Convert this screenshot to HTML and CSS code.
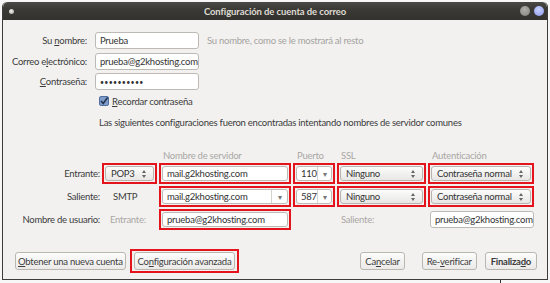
FILE: index.html
```html
<!DOCTYPE html>
<html>
<head>
    <title>Configuración de cuenta de correo</title>
    <link rel="stylesheet" href="styles.css">
</head>
<body>
    <div class="window">

        <div class="titlebar">
            <span class="dot-menu"></span>
            <span class="title">Configuración de cuenta de correo</span>
            <span class="dot dot-gray"></span>
            <span class="dot dot-blue"></span>
        </div>

        <div class="content">

            <div class="identity">
                <span class="label">Su <u>n</u>ombre:</span>
                <div class="field">Prueba</div>
                <span class="hint">Su nombre, como se le mostrará al resto</span>

                <span class="label">Correo e<u>l</u>ectrónico:</span>
                <div class="field">prueba@g2khosting.com</div>
                <span></span>

                <span class="label"><u>C</u>ontraseña:</span>
                <div class="field field-password">••••••••••</div>
                <span></span>
            </div>

            <div class="remember">
                <svg class="checkbox" width="10" height="10" viewBox="0 0 10 10">
                    <rect x="0.5" y="0.5" width="9" height="9" rx="1.5" fill="#7e9bc9" stroke="#4f6f9f"/>
                    <path d="M2 5 L4.2 7.4 L8.6 1.6" fill="none" stroke="#23344f" stroke-width="1.6"/>
                </svg>
                <span><u>R</u>ecordar contraseña</span>
            </div>

            <div class="info">Las siguientes configuraciones fueron encontradas intentando nombres de servidor comunes</div>

            <!-- Server settings grid -->
            <div class="servers">
                <span></span>
                <span></span>
                <span class="column-head">Nombre de servidor</span>
                <span class="column-head">Puerto</span>
                <span class="column-head">SSL</span>
                <span class="column-head">Autenticación</span>

                <span class="label">Entrante:</span>
                <div class="mark"><div class="select">POP3<span class="updown"></span></div></div>
                <div class="mark"><div class="field">mail.g2khosting.com</div></div>
                <div class="mark"><div class="combo">110<span class="drop">▾</span></div></div>
                <div class="mark"><div class="select">Ninguno<span class="updown"></span></div></div>
                <div class="mark"><div class="select">Contraseña normal<span class="updown"></span></div></div>

                <span class="label">Saliente:</span>
                <span class="protocol">SMTP</span>
                <div class="mark"><div class="combo">mail.g2khosting.com<span class="drop">▾</span></div></div>
                <div class="mark"><div class="combo">587<span class="drop">▾</span></div></div>
                <div class="mark"><div class="select">Ninguno<span class="updown"></span></div></div>
                <div class="mark"><div class="select">Contraseña normal<span class="updown"></span></div></div>

                <span class="label">Nombre de usuario:</span>
                <span class="muted muted-in">Entrante:</span>
                <div class="mark"><div class="field">prueba@g2khosting.com</div></div>
                <span></span>
                <span class="muted muted-out">Saliente:</span>
                <div class="field field-plain">prueba@g2khosting.com</div>
            </div>

            <div class="footer">
                <button class="button button-new"><u>O</u>btener una nueva cuenta</button>
                <div class="mark mark-button"><button class="button">Co<u>n</u>figuración avanzada</button></div>
                <span class="spacer"></span>
                <button class="button button-cancel">Ca<u>n</u>celar</button>
                <button class="button button-verify">Re-<u>v</u>erificar</button>
                <button class="button button-default">Finaliza<u>d</u>o</button>
            </div>

        </div>
    </div>

    <div class="below">
        <span class="below-text">Datos del servidor</span>
        <span class="below-line"></span>
    </div>
</body>
</html>
```

FILE: styles.css
```css
body
{
    margin: 0;
    background-color: #f7f7f7;
    font-family: Lato, "Open Sans", sans-serif;
    font-size: 9.5px;
    letter-spacing: -0.25px;
    color: #3c3c3c;
    overflow: hidden;
}

u
{
    text-decoration: underline;
    text-underline-offset: 1px;
}

.window
{
    margin: 2px 2px 0 2px;
    width: 544px;
    height: 277px;
    border: 1px solid #3d3c39;
    border-top: none;
    border-radius: 5px 5px 0 0;
    background-color: #f2f1f0;
    display: flex;
    flex-direction: column;
    overflow: hidden;
}

.titlebar
{
    height: 18px;
    flex-shrink: 0;
    display: flex;
    align-items: center;
    padding: 0 3px 0 6px;
    background: linear-gradient(to bottom, #4a4945, #3a3935 40%, #33322e);
    border-radius: 5px 5px 0 0;
}

.dot-menu
{
    width: 5px;
    height: 5px;
    border-radius: 50%;
    background: radial-gradient(circle at 40% 40%, #f4f4f4, #9b9a96);
}

.title
{
    flex: 1;
    text-align: center;
    color: #dfdbd2;
    font-weight: bold;
    font-size: 9.5px;
    letter-spacing: -0.1px;
    padding-left: 20px;
}

.dot
{
    width: 10px;
    height: 10px;
    border-radius: 50%;
    margin-left: 4px;
}

.dot-gray
{
    background: radial-gradient(circle at 45% 35%, #b0aea8, #84827c);
}

.dot-blue
{
    background: radial-gradient(circle at 45% 35%, #c9d0ff, #8797ea);
}

.content
{
    flex: 1;
    display: flex;
    flex-direction: column;
    padding-top: 12px;
}

.identity
{
    display: grid;
    grid-template-columns: 84px 104px auto;
    grid-auto-rows: 17px;
    column-gap: 8px;
    row-gap: 3.5px;
    align-items: center;
}

.label
{
    text-align: right;
    white-space: nowrap;
}

.field
{
    height: 100%;
    box-sizing: border-box;
    background-color: #fff;
    border: 1px solid #bdbab5;
    border-radius: 3px;
    padding: 0 4px;
    display: flex;
    align-items: center;
    white-space: nowrap;
    overflow: hidden;
    color: #333;
}

.field-password
{
    font-size: 7px;
    letter-spacing: 0.3px;
}

.hint
{
    color: #a5a39f;
    white-space: nowrap;
}

.remember
{
    display: flex;
    align-items: center;
    gap: 2px;
    margin: 5px 0 0 96px;
    height: 12px;
}

.checkbox
{
    margin-right: 1px;
}

.info
{
    margin: 9px 0 0 96px;
    line-height: 14px;
    white-space: nowrap;
}

.servers
{
    display: grid;
    grid-template-columns: 97px 55px 132px 42px 89px 106px;
    grid-template-rows: 12px 21px 21px 21px;
    column-gap: 2px;
    row-gap: 2px;
    align-items: center;
    margin-top: 19px;
}

.column-head
{
    color: #a9a7a3;
    padding-left: 4px;
    white-space: nowrap;
}

.mark
{
    height: 21px;
    box-sizing: border-box;
    border: 2px solid #e3141b;
    padding: 1px;
}

.mark .field
{
    height: 15px;
}

.select
{
    height: 15px;
    box-sizing: border-box;
    border: 1px solid #b7b4ae;
    border-radius: 3px;
    background: linear-gradient(to bottom, #fcfcfc, #e8e7e5);
    display: flex;
    align-items: center;
    padding-left: 5px;
    position: relative;
    white-space: nowrap;
    color: #333;
}

.updown
{
    position: absolute;
    right: 7px;
    top: 3px;
    width: 0;
    height: 0;
    border-left: 2px solid transparent;
    border-right: 2px solid transparent;
    border-bottom: 3px solid #666;
}

.updown::after
{
    content: "";
    position: absolute;
    left: -2px;
    top: 5px;
    border-left: 2px solid transparent;
    border-right: 2px solid transparent;
    border-top: 3px solid #666;
}

.combo
{
    height: 15px;
    box-sizing: border-box;
    border: 1px solid #bdbab5;
    border-radius: 3px;
    background-color: #fff;
    display: flex;
    align-items: center;
    padding-left: 4px;
    white-space: nowrap;
    color: #333;
}

.drop
{
    margin-left: auto;
    width: 15px;
    height: 100%;
    border-left: 1px solid #d6d3ce;
    display: flex;
    align-items: center;
    justify-content: center;
    color: #777;
    font-size: 8px;
}

.protocol
{
    padding-left: 11px;
}

.muted
{
    color: #a9a7a3;
}

.muted-in
{
    padding-left: 8px;
}

.muted-out
{
    padding-left: 4px;
}

.field-plain
{
    height: 17px;
    margin-left: 2px;
}

.footer
{
    margin-top: auto;
    display: flex;
    align-items: center;
    padding: 0 10px 6px 12px;
}

.button
{
    height: 18px;
    padding: 0 3px;
    border: 1px solid #bab7b1;
    border-radius: 3px;
    background: linear-gradient(to bottom, #fcfcfc, #ebeae8);
    font-family: Lato, "Open Sans", sans-serif;
    font-size: 9.5px;
    letter-spacing: -0.25px;
    color: #3c3c3c;
    cursor: pointer;
}

.button-new
{
    padding: 0 2px;
}

.mark-button
{
    height: 24px;
    margin-left: 4px;
    padding: 1px 2px;
}

.spacer
{
    flex: 1;
}

.button-cancel
{
    padding: 0 4px;
    margin-right: 17px;
}

.button-verify
{
    padding: 0 4px;
}

.button-default
{
    margin-left: 8px;
    font-weight: bold;
    padding: 0 5px;
}

.below
{
    position: relative;
    height: 10px;
}

.below-text
{
    position: absolute;
    left: 4px;
    top: 1px;
    font-family: "Liberation Sans", sans-serif;
    font-size: 14px;
    font-weight: bold;
    letter-spacing: 0;
    color: #222;
    white-space: nowrap;
}

.below-line
{
    position: absolute;
    left: 500px;
    top: 0;
    width: 1px;
    height: 10px;
    background-color: #333;
}
```
